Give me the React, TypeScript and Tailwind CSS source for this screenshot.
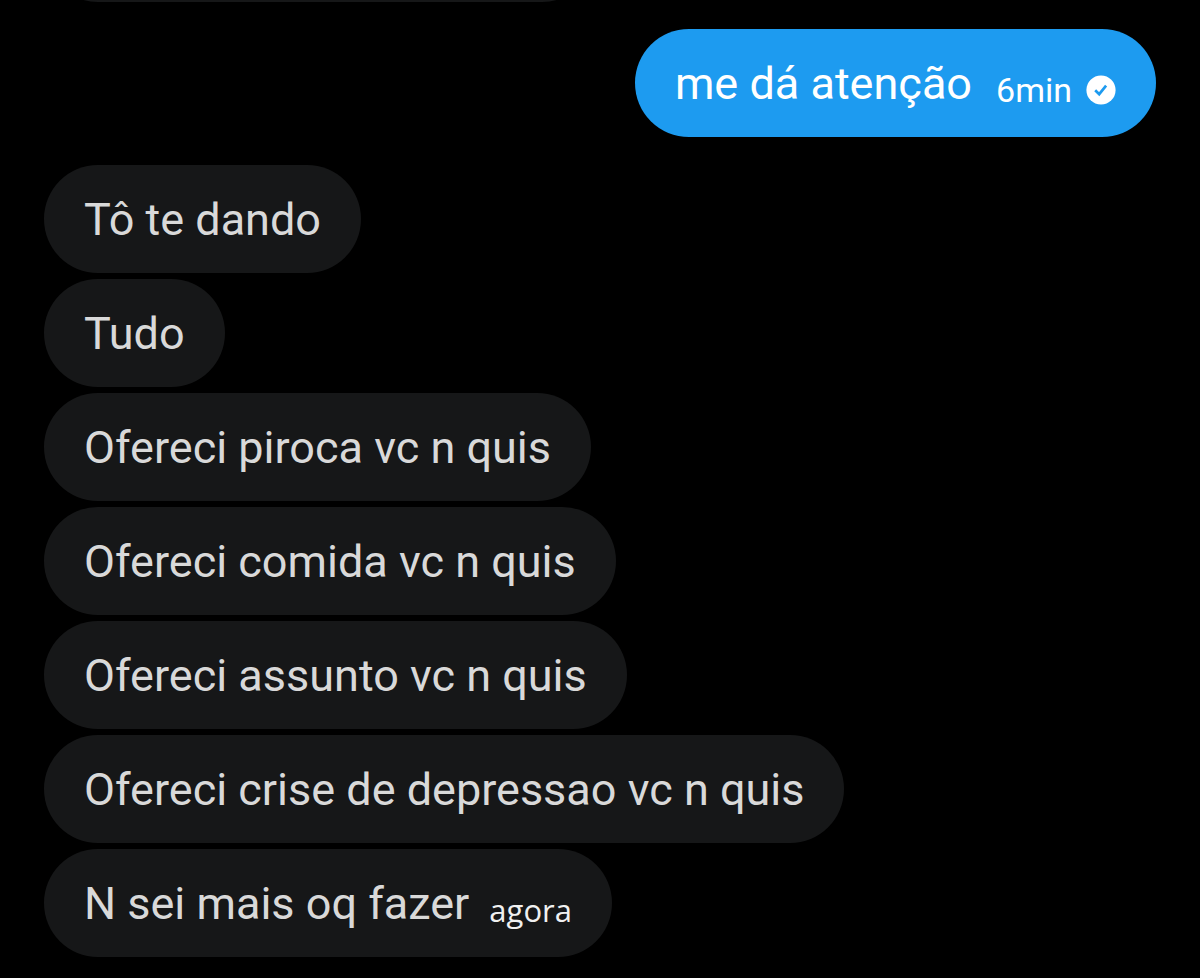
type Message = { text: string; time?: string };

const received: Message[] = [
  { text: "Tô te dando" },
  { text: "Tudo" },
  { text: "Ofereci piroca vc n quis" },
  { text: "Ofereci comida vc n quis" },
  { text: "Ofereci assunto vc n quis" },
  { text: "Ofereci crise de depressao vc n quis" },
  { text: "N sei mais oq fazer", time: "agora" },
];

function SentIcon() {
  return (
    <svg viewBox="0 0 30 30" className="size-[30px] shrink-0" role="img" aria-label="Enviada">
      <circle cx="15" cy="15" r="14.6" fill="#fff" />
      <path d="M9.2 15.3l4 3.9 6.9-8.5" fill="none" stroke="#1d9bf0" strokeWidth="2.7" />
    </svg>
  );
}

export default function App() {
  return (
    <main className="min-h-screen overflow-hidden bg-black px-11 pb-5 font-[Roboto,sans-serif] text-[45px] leading-[60px] text-[#d9d9d9]">
      {/* Bottom edge of the earlier message, scrolled out of view */}
      <div className="flex h-0.5 items-end overflow-hidden">
        <div className="h-[108px] w-[552px] shrink-0 rounded-full bg-[#161718]" />
      </div>
      <div className="mt-[27px] ml-auto flex h-[108px] w-fit items-center gap-6 rounded-full bg-[#1d9bf0] px-10 text-white">
        <p className="pt-0.5">me dá atenção</p>
        <div className="flex items-center gap-3.5 pt-3.5">
          <time className="text-[34px]">6min</time>
          <SentIcon />
        </div>
      </div>
      <ul className="mt-7 flex flex-col items-start gap-1.5">
        {received.map((m) => (
          <li key={m.text} className="flex h-[108px] items-center gap-5 rounded-full bg-[#161718] px-10">
            <p className="pt-0.5">{m.text}</p>
            {m.time && <time className="pt-3.5 font-['Open_Sans',sans-serif] text-[31px] text-[#f0f0f0]">{m.time}</time>}
          </li>
        ))}
      </ul>
    </main>
  );
}
